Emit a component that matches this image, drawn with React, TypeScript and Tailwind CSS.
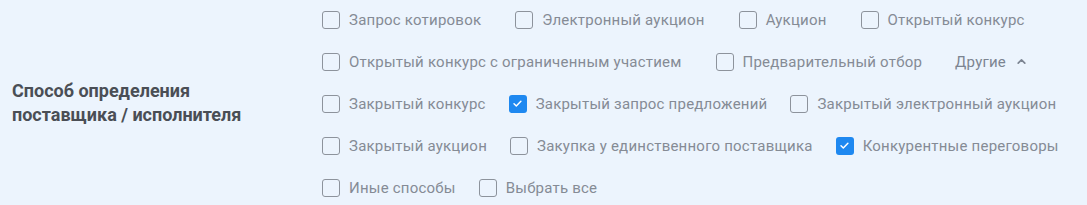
import * as React from "react";

type Item = { label: string; checked?: boolean };

const mainRows: Item[][] = [
  [
    { label: "Запрос котировок" },
    { label: "Электронный аукцион" },
    { label: "Аукцион" },
    { label: "Открытый конкурс" },
  ],
  [
    { label: "Открытый конкурс с ограниченным участием" },
    { label: "Предварительный отбор" },
  ],
];

const otherRows: Item[][] = [
  [
    { label: "Закрытый конкурс" },
    { label: "Закрытый запрос предложений", checked: true },
    { label: "Закрытый электронный аукцион" },
  ],
  [
    { label: "Закрытый аукцион" },
    { label: "Закупка у единственного поставщика" },
    { label: "Конкурентные переговоры", checked: true },
  ],
  [{ label: "Иные способы" }, { label: "Выбрать все" }],
];

function Checkbox({ label, checked }: Item) {
  return (
    <label className="flex items-center gap-[9px] cursor-pointer select-none">
      {checked ? (
        <span className="flex h-[18px] w-[18px] items-center justify-center rounded-[3px] bg-[#1e88f0]">
          <svg viewBox="0 0 12 12" className="h-[11px] w-[11px]" fill="none">
            <path
              d="M2.2 6.3l2.5 2.4 5-5.2"
              stroke="white"
              strokeWidth="1.6"
              strokeLinecap="round"
              strokeLinejoin="round"
            />
          </svg>
        </span>
      ) : (
        <span className="h-[18px] w-[18px] rounded-[3px] border border-[#8d939c]" />
      )}
      <span className="text-[15px] leading-[24px] tracking-[0.22px] text-[#858b95] whitespace-nowrap">
        {label}
      </span>
    </label>
  );
}

export default function App() {
  return (
    <div
      className="flex h-[205px] w-[1087px] items-center bg-[#ecf4fd]"
      style={{ fontFamily: "Roboto, 'Noto Sans', sans-serif" }}
    >
      {/* Section title */}
      <div className="w-[322px] shrink-0 pl-3 text-[18px] font-bold leading-[24px] text-[#4a4e55]">
        Способ определения
        <br />
        поставщика / исполнителя
      </div>

      {/* Options */}
      <div className="flex flex-col gap-[18px] pt-[2px]">
        {mainRows.map((row, i) => (
          <div key={i} className="flex h-[24px] items-center gap-x-[34px]">
            {row.map((it) => (
              <Checkbox key={it.label} {...it} />
            ))}
            {i === 1 && (
              <button className="-ml-[1px] flex items-center gap-[10px] text-[15px] leading-[24px] tracking-[0.22px] text-[#7c8491]">
                Другие
                <svg viewBox="0 0 10 10" className="h-[11px] w-[11px]" fill="none">
                  <path
                    d="M2 6.5l3-3 3 3"
                    stroke="currentColor"
                    strokeWidth="1.5"
                    strokeLinecap="round"
                    strokeLinejoin="round"
                  />
                </svg>
              </button>
            )}
          </div>
        ))}
        {otherRows.map((row, i) => (
          <div key={i} className="flex h-[24px] items-center gap-x-[23px]">
            {row.map((it) => (
              <Checkbox key={it.label} {...it} />
            ))}
          </div>
        ))}
      </div>
    </div>
  );
}
